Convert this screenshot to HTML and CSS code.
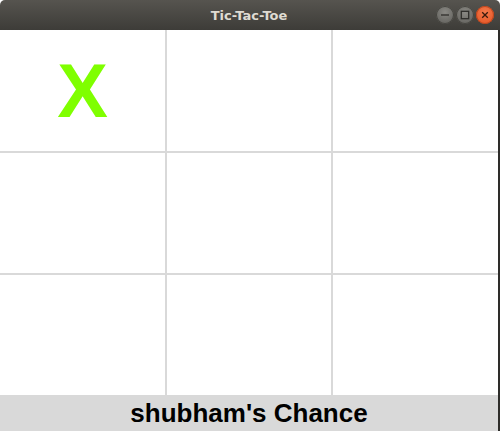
FILE: index.html
```html
<!DOCTYPE html>
<html>
<head>
<meta charset="utf-8">
<link rel="stylesheet" href="styles.css">
</head>
<body>
<div class="window">
  <div class="titlebar">
    <span class="title">Tic-Tac-Toe</span>
    <div class="controls">
      <span class="btn min"><svg width="18" height="18" viewBox="0 0 18 18"><line x1="5" y1="9" x2="13" y2="9" stroke="#2f2e2b" stroke-width="1.3"/></svg></span>
      <span class="btn max"><svg width="18" height="18" viewBox="0 0 18 18"><rect x="5.3" y="5.3" width="7.4" height="7.4" fill="none" stroke="#2f2e2b" stroke-width="1.3"/></svg></span>
      <span class="btn close"><svg width="18" height="18" viewBox="0 0 18 18"><path d="M6.2 6.2 L11.8 11.8 M11.8 6.2 L6.2 11.8" stroke="#3a1a0c" stroke-width="1.3"/></svg></span>
    </div>
  </div>
  <div class="content">
    <div class="board">
      <div class="cell"><span class="mark">X</span></div>
      <div class="cell"></div>
      <div class="cell"></div>
      <div class="cell"></div>
      <div class="cell"></div>
      <div class="cell"></div>
      <div class="cell"></div>
      <div class="cell"></div>
      <div class="cell"></div>
    </div>
    <div class="status">shubham's Chance</div>
  </div>
</div>
</body>
</html>
```
FILE: styles.css
```css
html, body {
  margin: 0;
  padding: 0;
  background: #ffffff;
}
.window {
  width: 500px;
  height: 431px;
  display: flex;
  flex-direction: column;
  overflow: hidden;
}
.titlebar {
  height: 30px;
  flex: none;
  position: relative;
  background: linear-gradient(#56544f, #3d3c38);
  border-radius: 5px 5px 0 0;
  display: flex;
  align-items: center;
  justify-content: center;
}
.title {
  font-family: "DejaVu Sans", sans-serif;
  font-weight: bold;
  font-size: 13px;
  color: #dfdbd2;
  margin-left: -2px;
}
.controls {
  position: absolute;
  right: 6px;
  top: 6px;
  display: flex;
  gap: 2px;
}
.btn {
  width: 18px;
  height: 18px;
  border-radius: 50%;
  display: block;
  background: radial-gradient(circle at 50% 35%, #8a8984, #5b5a56);
  box-shadow: inset 0 0 0 1px #45443f;
}
.btn svg { display: block; }
.btn.close {
  background: radial-gradient(circle at 50% 35%, #f47a4c, #e2501f);
  box-shadow: inset 0 0 0 1px #b9451d;
}
.content {
  flex: 1;
  display: flex;
  flex-direction: column;
  border-right: 2px solid #2e2d2a;
}
.board {
  display: grid;
  grid-template-columns: 165px 164px 165px;
  grid-template-rows: 121px 120px 120px;
  gap: 2px;
  background: #d9d9d9;
}
.cell {
  background: #ffffff;
  display: flex;
  align-items: center;
  justify-content: center;
}
.mark {
  font-family: "Liberation Sans", Arial, sans-serif;
  font-weight: bold;
  font-size: 76px;
  line-height: 1;
  color: #7fff00;
}
.status {
  flex: 1;
  background: #d9d9d9;
  display: flex;
  align-items: center;
  justify-content: center;
  font-family: "Liberation Sans", Arial, sans-serif;
  font-weight: bold;
  font-size: 26px;
  color: #000000;
}
```
